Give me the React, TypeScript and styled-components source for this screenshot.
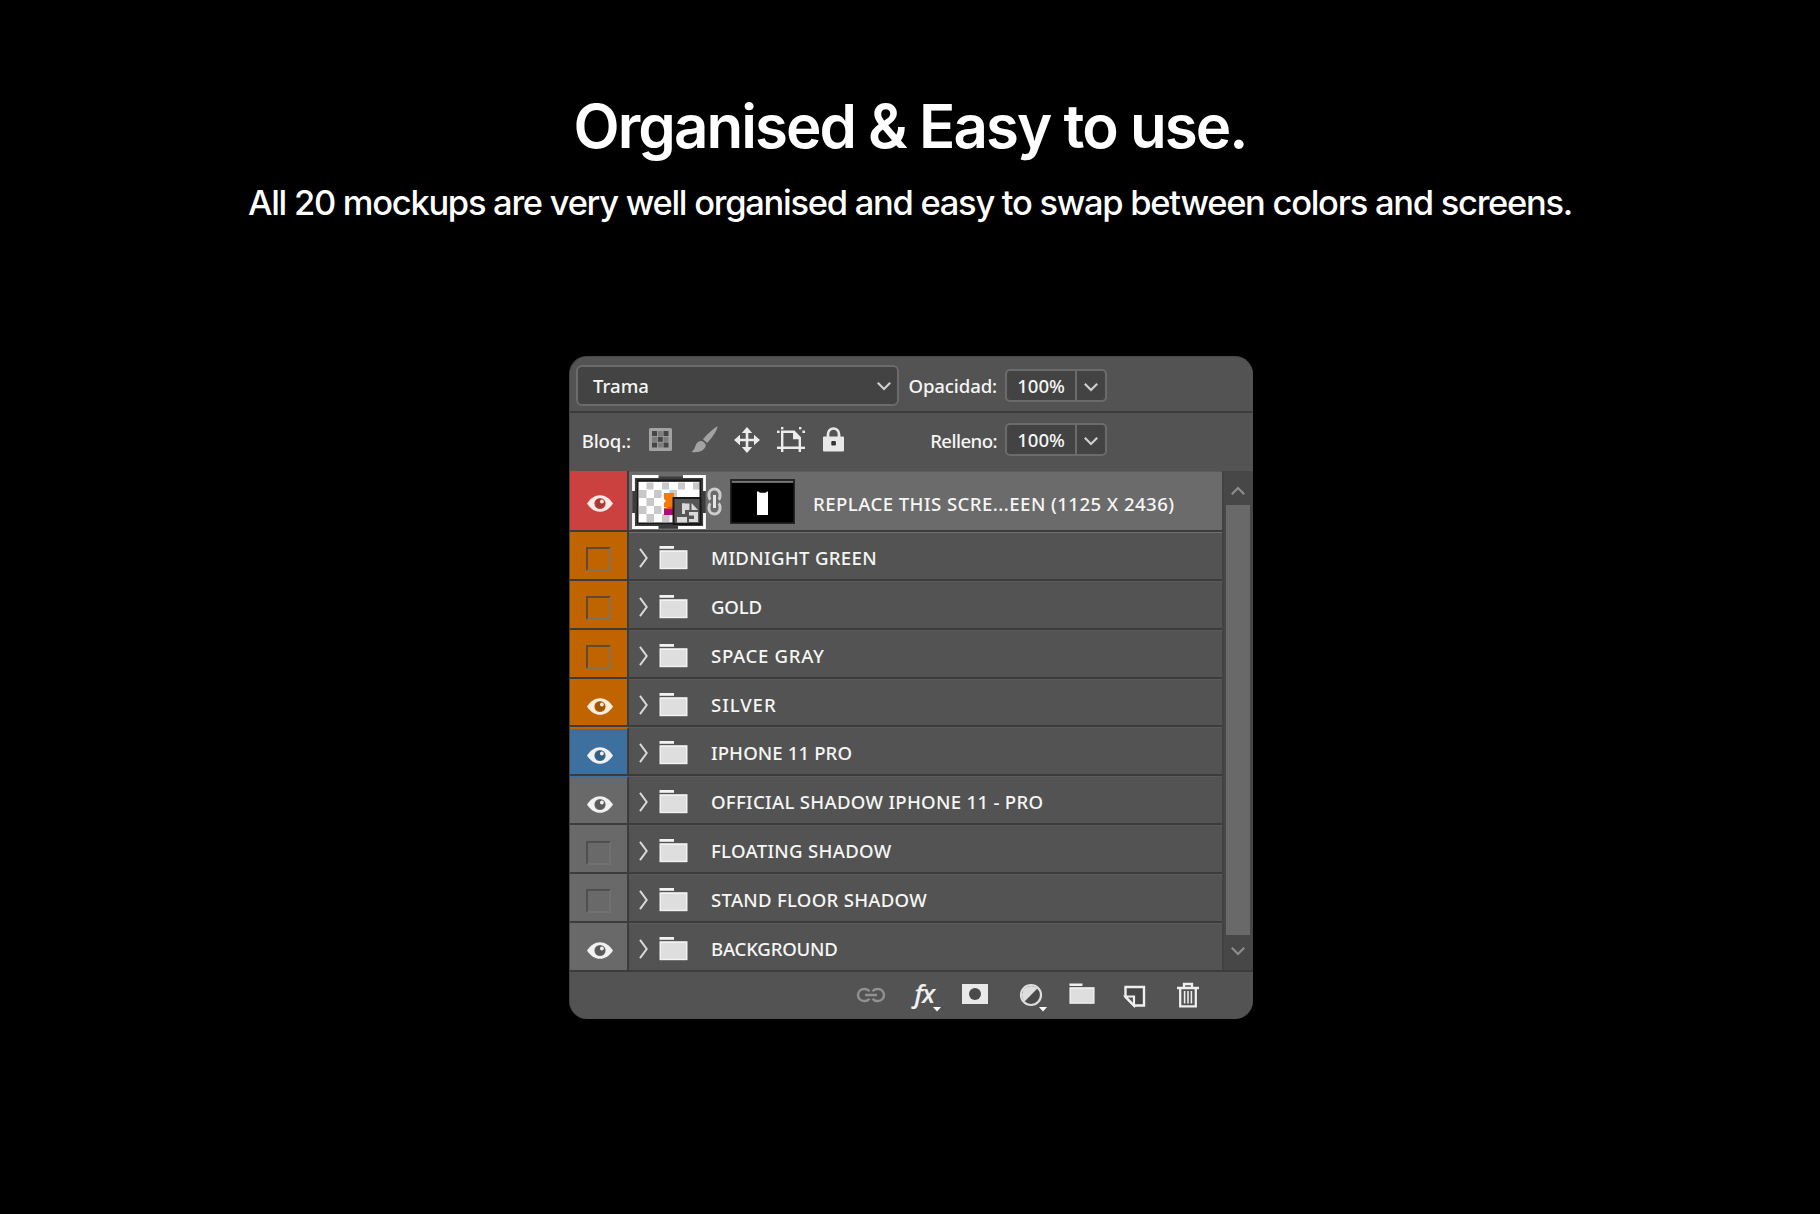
import React from "react";
import styled, { createGlobalStyle } from "styled-components";

const GlobalStyle = createGlobalStyle`
  *, *::before, *::after { box-sizing: border-box; }
  html, body { margin: 0; background: #000; }
  body { overflow: hidden; }
  svg { display: block; flex: none; overflow: visible; }
`;

const c = {
  panel: "#535353",
  field: "#434343",
  line: "#3c3c3c",
  edge: "#6b6b6b",
  selected: "#6b6b6b",
  text: "#f6f6f4",
  icon: "#e3e3e3",
  dim: "#a2a2a2",
  red: "#cb413f",
  orange: "#c06400",
  blue: "#3e709f",
  gray: "#696969",
};

const Page = styled.main`
  width: 1820px;
  height: 1214px;
  padding-top: 90px;
  background: #000;
  display: flex;
  flex-direction: column;
  align-items: center;
  color: #fff;
`;

const Title = styled.h1`
  margin: 0;
  font: 600 60px/72px Inter, "Liberation Sans", sans-serif;
  letter-spacing: -1.95px;
  white-space: nowrap;
`;

const Subtitle = styled.p`
  margin: 19px 0 131px;
  font: 500 34.5px/44px Inter, "Liberation Sans", sans-serif;
  letter-spacing: -1.28px;
  white-space: nowrap;
`;

const Panel = styled.section`
  width: 684px;
  height: 663px;
  margin-left: 2px;
  border-radius: 18px;
  overflow: hidden;
  background: ${c.panel};
  border-left: 1px solid #454545;
  border-top: 1px solid #484848;
  display: flex;
  flex-direction: column;
  font-family: "Noto Sans", "DejaVu Sans", sans-serif;
  font-weight: 500;
  color: ${c.text};
`;

const Bar = styled.div<{ $h: number; $pt?: number; $pb?: number; $line?: boolean }>`
  flex: none;
  height: ${(p) => p.$h}px;
  padding-top: ${(p) => p.$pt ?? 0}px;
  padding-bottom: ${(p) => p.$pb ?? 0}px;
  display: flex;
  align-items: center;
  border-bottom: ${(p) => (p.$line ? `2px solid ${c.line}` : "none")};
`;

const Label = styled.span<{ $ls?: number; $drop?: number }>`
  white-space: pre;
  line-height: 26px;
  font-size: 18.6px;
  letter-spacing: ${(p) => p.$ls ?? 0}px;
  padding-top: ${(p) => p.$drop ?? 0}px;
`;

const BlendSelect = styled.div`
  width: 323px;
  height: 41px;
  margin-left: 6px;
  padding: 0 6px 0 15px;
  border: 2px solid ${c.edge};
  border-radius: 6px;
  background: ${c.field};
  display: flex;
  align-items: center;
  justify-content: space-between;
`;

const FieldLabel = styled.div<{ $w: number }>`
  width: ${(p) => p.$w}px;
  display: flex;
  justify-content: flex-end;
  margin-right: 8px;
`;

const NumberField = styled.div`
  width: 102px;
  height: 33px;
  border: 2px solid ${c.edge};
  border-radius: 5px;
  background: ${c.field};
  display: grid;
  grid-template-columns: 68px 1fr;
  align-items: stretch;
`;

const NumberCell = styled.div<{ $split?: boolean }>`
  display: flex;
  align-items: center;
  justify-content: center;
  padding-top: ${(p) => (p.$split ? 2 : 0)}px;
  border-left: ${(p) => (p.$split ? `2px solid ${c.edge}` : "none")};
`;

const LockTools = styled.div`
  display: flex;
  align-items: center;
  margin-left: 4px;
  width: 222px;
`;

const ToolSlot = styled.div<{ $w: number }>`
  width: ${(p) => p.$w}px;
  display: flex;
  justify-content: center;
`;

const Body = styled.div`
  flex: none;
  height: 499px;
  display: grid;
  grid-template-columns: 652px 31px;
`;

const Layers = styled.div`
  display: flex;
  flex-direction: column;
  overflow: hidden;
`;

const Row = styled.div<{ $selected?: boolean }>`
  flex: none;
  height: ${(p) => (p.$selected ? 61 : 48.86)}px;
  display: grid;
  grid-template-columns: 59px 1fr;
  border-bottom: 2px solid ${c.line};
`;

const Visibility = styled.div<{ $color: string; $strip?: string; $drop: number }>`
  background: ${(p) => p.$color};
  border-right: 2px solid ${c.line};
  border-top: ${(p) => (p.$strip ? `2px solid ${p.$strip}` : "0")};
  padding-left: 2px;
  padding-top: ${(p) => p.$drop - (p.$strip ? 2 : 0)}px;
  display: flex;
  align-items: center;
  justify-content: center;
`;

const RowBody = styled.div<{ $selected?: boolean; $top?: boolean }>`
  background: ${(p) => (p.$selected ? c.selected : c.panel)};
  border-top: 1px solid ${(p) => (p.$top ? "#707070" : "#5a5a5a")};
  display: flex;
  align-items: center;
  padding-left: ${(p) => (p.$selected ? 3 : 10)}px;
  padding-top: ${(p) => (p.$selected ? 1 : 4)}px;
`;

const GroupIcons = styled.div`
  width: 72px;
  display: flex;
  align-items: center;
  gap: 11px;
`;

const EmptyBox = styled.div<{ $tone: string; $top: string }>`
  width: 25px;
  height: 24px;
  margin-left: -3px;
  border: 2.5px solid ${(p) => p.$tone};
  border-top-color: ${(p) => p.$top};
  border-left-color: ${(p) => p.$top};
`;

const ScrollTrack = styled.div`
  background: #474747;
  border-left: 2px solid #424242;
  display: flex;
  flex-direction: column;
  align-items: center;
  padding-right: 1px;
`;

const ScrollArrow = styled.div<{ $h: number }>`
  height: ${(p) => p.$h}px;
  padding-top: 5px;
  display: flex;
  align-items: center;
`;

const ScrollThumb = styled.div`
  width: 24px;
  height: 430px;
  background: #696969;
`;

const Footer = styled.footer`
  flex: 1;
  border-top: 2px solid ${c.line};
  padding: 0 0 1px 275px;
  display: flex;
  align-items: center;
`;

const FooterSlot = styled.div`
  width: 52.75px;
  height: 30px;
  display: flex;
  justify-content: center;
`;

const Fx = styled.span`
  position: relative;
  width: 30px;
  height: 30px;
  font: italic 600 26px/26px "Open Sans", "Noto Sans", sans-serif;
  letter-spacing: -1px;
  padding-left: 5px;
  color: #f0f0f0;
`;

const FxArrow = styled.svg`
  position: absolute;
  left: 24px;
  top: 27px;
`;

const Chevron = ({ up, color = "#cfcfcf", w = 14 }: { up?: boolean; color?: string; w?: number }) => (
  <svg width={w} height={8} viewBox="0 0 14 8" fill="none" stroke={color} strokeWidth="2.2">
    <path d={up ? "M.8 7.2 7 1l6.2 6.2" : "M.8.8 7 7 13.2.8"} />
  </svg>
);

const CheckerIcon = () => (
  <svg width="23" height="23" viewBox="0 0 23 23">
    <rect width="23" height="23" rx="1.5" fill="#a2a2a2" />
    <g fill="#464646">
      <rect x="3" y="3" width="5" height="5" />
      <rect x="14.5" y="3" width="5" height="5" />
      <rect x="8.8" y="8.8" width="5" height="5" />
      <rect x="3" y="14.5" width="5" height="5" />
      <rect x="14.5" y="14.5" width="5" height="5" />
      <g opacity=".4">
        <rect x="8.8" y="3" width="5" height="5" />
        <rect x="3" y="8.8" width="5" height="5" />
        <rect x="14.5" y="8.8" width="5" height="5" />
        <rect x="8.8" y="14.5" width="5" height="5" />
      </g>
    </g>
  </svg>
);

const BrushIcon = () => (
  <svg width="27" height="27" viewBox="0 0 27 27" fill="#a2a2a2">
    <path d="M26.500.5c.7 2-5.600 11.700-10.400 16.500L12 13.300C16.200 8 24.500.6 26.500.5Z" />
    <path d="M10.700 15c2.400.8 3.700 2.300 4.200 4.300-1.300 5.900-7.700 7.700-14.600 6.600 3.200-2 3.300-4.200 4.700-7.400 1.100-2.400 3-3.800 5.700-3.500Z" />
  </svg>
);

const MoveIcon = () => (
  <svg width="26" height="26" viewBox="0 0 26 26" fill="#ececec">
    <path d="M13 0l5.200 6h-3.900v5.700H20V7.800l6 5.200-6 5.200v-3.900h-5.700V20h3.900L13 26l-5.200-6h3.900v-5.700H6v3.900L0 13l6-5.200v3.900h5.700V6H7.800Z" />
  </svg>
);

const ArtboardIcon = () => (
  <svg width="28" height="25" viewBox="0 0 28 25">
    <path d="M5.200 4.800H17l5.800 6v10H5.200Z" fill="none" stroke="#ececec" strokeWidth="2.400" />
    <path d="M16 4l8 8.200h-8Z" fill="#ececec" />
    <g fill="#ececec">
      <rect x="4" y="0" width="2.400" height="2.400" />
      <rect x="0" y="3.600" width="2.600" height="2.400" />
      <rect x="22" y="0" width="2.400" height="2.400" />
      <rect x="25.400" y="3.600" width="2.600" height="2.400" />
      <rect x="0" y="19.600" width="4" height="2.400" />
      <rect x="4" y="22" width="2.400" height="3" />
      <rect x="24" y="19.600" width="4" height="2.400" />
      <rect x="21.600" y="22" width="2.400" height="3" />
    </g>
  </svg>
);

const LockIcon = () => (
  <svg width="21" height="25" viewBox="0 0 21 25">
    <path d="M5 11V7a5.500 5.500 0 0 1 11 0v4" fill="none" stroke="#e8e8e8" strokeWidth="2.700" />
    <rect x="0" y="9.500" width="21" height="15" rx="1" fill="#e8e8e8" />
    <rect x="8.300" y="14" width="4.600" height="4.600" rx="1" fill="#333" />
  </svg>
);

const EyeIcon = ({ bg, tint = "#f1f1f1" }: { bg: string; tint?: string }) => (
  <svg width="26" height="17" viewBox="0 0 26 17">
    <path d="M0 8.500C3.500 3.200 7.900.2 13 .2s9.500 3 13 8.300c-3.500 5.300-7.900 8.300-13 8.300S3.500 13.800 0 8.500Z" fill={tint} />
    <circle cx="13" cy="8.500" r="5.600" fill={bg} />
    <circle cx="13" cy="8.500" r="4.700" fill="#222" opacity=".22" />
    <circle cx="14.900" cy="6.500" r="1.900" fill={tint} />
  </svg>
);

const DisclosureIcon = () => (
  <svg width="9" height="20" viewBox="0 0 9 20" fill="none" stroke="#dadada" strokeWidth="2">
    <path d="M1 .8 7.700 10 1 19.200" />
  </svg>
);

const FolderIcon = ({ w = 29, h = 24 }: { w?: number; h?: number }) => (
  <svg width={w} height={h} viewBox="0 0 29 24" preserveAspectRatio="none">
    <rect x=".5" y="0" width="14.500" height="2.800" fill="#f2f2f2" />
    <rect x=".5" y="4.200" width="28" height="19" fill="#f2f2f2" />
    <rect x="2" y="6" width="25" height="15.800" fill="#dedede" />
  </svg>
);

const SmartThumb = () => (
  <svg width="74" height="54" viewBox="0 0 74 54">
    <path d="M2.500 3.500h69v48h-69Z" fill="none" stroke="#3c3c3c" strokeWidth="4" />
    <rect x="6" y="7" width="62" height="41" fill="#fff" />
    <g fill="#c8c8c8">
      {[14.5, 30, 46, 61].map((x) => <rect key={x} x={x} y="7.500" width="7" height="7" />)}
      {[7, 22, 37.5].map((x) => <rect key={x} x={x} y="15" width="7.500" height="8" />)}
      {[14.5].map((x) => <rect key={x} x={x} y="23" width="7.500" height="8" />)}
      {[7, 22].map((x) => <rect key={x} x={x} y="31" width="7.500" height="8" />)}
      {[14.5, 30].map((x) => <rect key={x} x={x} y="39" width="7.500" height="8" />)}
    </g>
    <path d="M32 18h10v9h-1v5h-9v-4l2-2-2-2Z" fill="#f47a05" />
    <path d="M32 33l9-2v4h-9Z" fill="#ea4a4a" />
    <path d="M32 34h9v6h-9Z" fill="#b50a7c" />
    <path d="M5.500 5.500h63v43h-63Z" fill="none" stroke="#181818" strokeWidth="2" />
    <rect x="41.500" y="23" width="27" height="26" fill="#565656" stroke="#181818" strokeWidth="2" />
    <g fill="#d9d9d9">
      <path d="M50 28.500h7.500V35H50Z" />
      <path d="M50 28.500h3V39h-3Z" />
      <path d="M59.500 28l6.500 7h-6.500Z" />
      <path d="M57 37h9v10h-9v-3h5v-3.500h-5Z" />
      <path d="M45 42h10v5.500H45Z" />
    </g>
    <path d="M1.500 16V1.500h25M51 1.500h21.500V16M1.500 38v14.500h25M46 52.500h26.500V38" fill="none" stroke="#fff" strokeWidth="2.800" />
  </svg>
);

const ChainIcon = () => (
  <svg width="15" height="29" viewBox="0 0 15 29" fill="none" stroke="#cdcdcd" strokeWidth="3">
    <path d="M3.500 12.500C2.300 11.700 2 10.500 2 9V7.500a5.500 5.500 0 0 1 11 0V9c0 1.500-.3 2.700-1.500 3.500" />
    <path d="M3.500 16.500C2.300 17.300 2 18.500 2 20v1.500a5.500 5.500 0 0 0 11 0V20c0-1.500-.3-2.700-1.500-3.500" />
    <path d="M7.500 8v13" stroke="#e6e6e6" />
  </svg>
);

const MaskThumb = () => (
  <svg width="65" height="45" viewBox="0 0 65 45">
    <rect width="65" height="45" fill="#262626" />
    <rect x="1.500" y="4" width="62" height="39.500" fill="#000" />
    <rect x="2" y="2" width="61" height="1.800" fill="#777" />
    <path d="M27 12.500h1.500l1.500 1.200h5.500l1.500-1.200H38v23.500H27Z" fill="#fff" />
  </svg>
);

const LinkIcon = () => (
  <svg width="28" height="30" viewBox="0 0 28 30" fill="none" stroke="#919191" strokeWidth="2.400">
    <path d="M12.500 11.200A6 6 0 0 0 7 9a6 6 0 0 0 0 12 6 6 0 0 0 5.500-2.200M15.500 11.200A6 6 0 0 1 21 9a6 6 0 0 1 0 12 6 6 0 0 1-5.500-2.200M8 15h12" />
  </svg>
);

const AddMaskIcon = () => (
  <svg width="28" height="30" viewBox="1 0 28 30">
    <rect x="0" y="4" width="26" height="20" fill="#e9e9e9" />
    <circle cx="13" cy="14" r="6" fill="#4a4a4a" />
  </svg>
);

const AdjustIcon = () => (
  <svg width="30" height="30" viewBox="0 0 30 30">
    <circle cx="16" cy="15" r="10" fill="#4a4a4a" stroke="#dedede" strokeWidth="2.200" />
    <path d="M22.400 8.600 9.600 21.400A9 9 0 0 1 22.400 8.600Z" fill="#dedede" />
    <path d="M24 27h8l-4 4.500Z" fill="#fff" />
  </svg>
);

const NewLayerIcon = () => (
  <svg width="22" height="30" viewBox="0 0 22 30">
    <path d="M1.500 7h18.500v18.500H10L1.500 17Z" fill="#464646" stroke="#efefef" strokeWidth="2.400" />
    <path d="M1.500 16.500H10v9Z" fill="#535353" stroke="#efefef" strokeWidth="2.200" />
  </svg>
);

const TrashIcon = () => (
  <svg width="22" height="30" viewBox="0 0 22 30" fill="none" stroke="#efefef" strokeWidth="2.300">
    <path d="M0 8h22M7 7.500V4h8v3.500M3.200 8v18.300h15.600V8" />
    <path d="M7.600 11v12.500M11 11v12.500M14.400 11v12.500" strokeWidth="1.600" />
  </svg>
);

type Layer = { name: string; color: string; visible: boolean; strip?: string; ls: number };

const layers: Layer[] = [
  { name: "MIDNIGHT GREEN", color: c.orange, visible: false, ls: 0.33 },
  { name: "GOLD", color: c.orange, visible: false, ls: -0.2 },
  { name: "SPACE GRAY", color: c.orange, visible: false, ls: 0.68 },
  { name: "SILVER", color: c.orange, visible: true, ls: 0.95 },
  { name: "IPHONE 11 PRO", color: c.blue, visible: true, strip: c.orange, ls: 0.1 },
  { name: "OFFICIAL SHADOW IPHONE 11 - PRO", color: c.gray, visible: true, strip: c.blue, ls: 0.29 },
  { name: "FLOATING SHADOW", color: c.gray, visible: false, ls: 0.3 },
  { name: "STAND FLOOR SHADOW", color: c.gray, visible: false, ls: 0.26 },
  { name: "BACKGROUND", color: c.gray, visible: true, ls: -0.2 },
];

const Percent = () => (
  <NumberField>
    <NumberCell>
      <Label $drop={1}>100%</Label>
    </NumberCell>
    <NumberCell $split>
      <Chevron />
    </NumberCell>
  </NumberField>
);

export default function App() {
  return (
    <>
      <GlobalStyle />
      <Page>
        <Title>Organised &amp; Easy to use.</Title>
        <Subtitle>All 20 mockups are very well organised and easy to swap between colors and screens.</Subtitle>
        <Panel>
          <Bar $h={56} $pt={3} $line>
            <BlendSelect>
              <Label $drop={1}>Trama</Label>
              <Chevron />
            </BlendSelect>
            <FieldLabel $w={98}>
              <Label $ls={-0.12} $drop={1}>Opacidad:</Label>
            </FieldLabel>
            <Percent />
          </Bar>
          <Bar $h={58} $pb={5}>
            <FieldLabel $w={61}>
              <Label $ls={-0.15} $drop={2}>Bloq.:</Label>
            </FieldLabel>
            <LockTools>
              <ToolSlot $w={34}><CheckerIcon /></ToolSlot>
              <ToolSlot $w={54}><BrushIcon /></ToolSlot>
              <ToolSlot $w={31}><MoveIcon /></ToolSlot>
              <ToolSlot $w={58}><ArtboardIcon /></ToolSlot>
              <ToolSlot $w={27}><LockIcon /></ToolSlot>
            </LockTools>
            <FieldLabel $w={132}>
              <Label $ls={-0.55} $drop={2}>Relleno:</Label>
            </FieldLabel>
            <Percent />
          </Bar>
          <Body>
            <Layers>
              <Row $selected>
                <Visibility $color={c.red} $drop={6}>
                  <EyeIcon bg={c.red} tint="#fbe9e6" />
                </Visibility>
                <RowBody $selected>
                  <SmartThumb />
                  <ToolSlot $w={17}><ChainIcon /></ToolSlot>
                  <ToolSlot $w={7} />
                  <MaskThumb />
                  <ToolSlot $w={18} />
                  <Label $ls={0.44} $drop={5}>REPLACE THIS SCRE...EEN (1125 X 2436)</Label>
                </RowBody>
              </Row>
              {layers.map((l, i) => (
                <Row key={l.name}>
                  <Visibility $color={l.color} $strip={l.strip} $drop={l.visible ? 9 : 8}>
                    {l.visible ? (
                      <EyeIcon bg={l.color} tint={l.color === c.orange ? "#fbeedd" : "#f1f1f1"} />
                    ) : (
                      <EmptyBox
                        $tone={l.color === c.orange ? "#84715a" : "#717171"}
                        $top={l.color === c.orange ? "#5e4a35" : "#4e4e4e"}
                      />
                    )}
                  </Visibility>
                  <RowBody $top={i === 0}>
                    <GroupIcons>
                      <DisclosureIcon />
                      <FolderIcon />
                    </GroupIcons>
                    <Label $ls={l.ls}>{l.name}</Label>
                  </RowBody>
                </Row>
              ))}
            </Layers>
            <ScrollTrack>
              <ScrollArrow $h={34}><Chevron up color="#8c8c8c" /></ScrollArrow>
              <ScrollThumb />
              <ScrollArrow $h={27}><Chevron color="#8c8c8c" /></ScrollArrow>
            </ScrollTrack>
          </Body>
          <Footer>
            <FooterSlot><LinkIcon /></FooterSlot>
            <FooterSlot>
              <Fx>
                fx
                <FxArrow width="8" height="5" viewBox="0 0 8 5"><path d="M0 0h8L4 4.500Z" fill="#fff" /></FxArrow>
              </Fx>
            </FooterSlot>
            <FooterSlot><AddMaskIcon /></FooterSlot>
            <FooterSlot><AdjustIcon /></FooterSlot>
            <FooterSlot><svg width="26" height="30" viewBox="0 0 26 30"><g transform="translate(0 3.500)"><FolderIcon w={26} h={21} /></g></svg></FooterSlot>
            <FooterSlot><NewLayerIcon /></FooterSlot>
            <FooterSlot><TrashIcon /></FooterSlot>
          </Footer>
        </Panel>
      </Page>
    </>
  );
}
